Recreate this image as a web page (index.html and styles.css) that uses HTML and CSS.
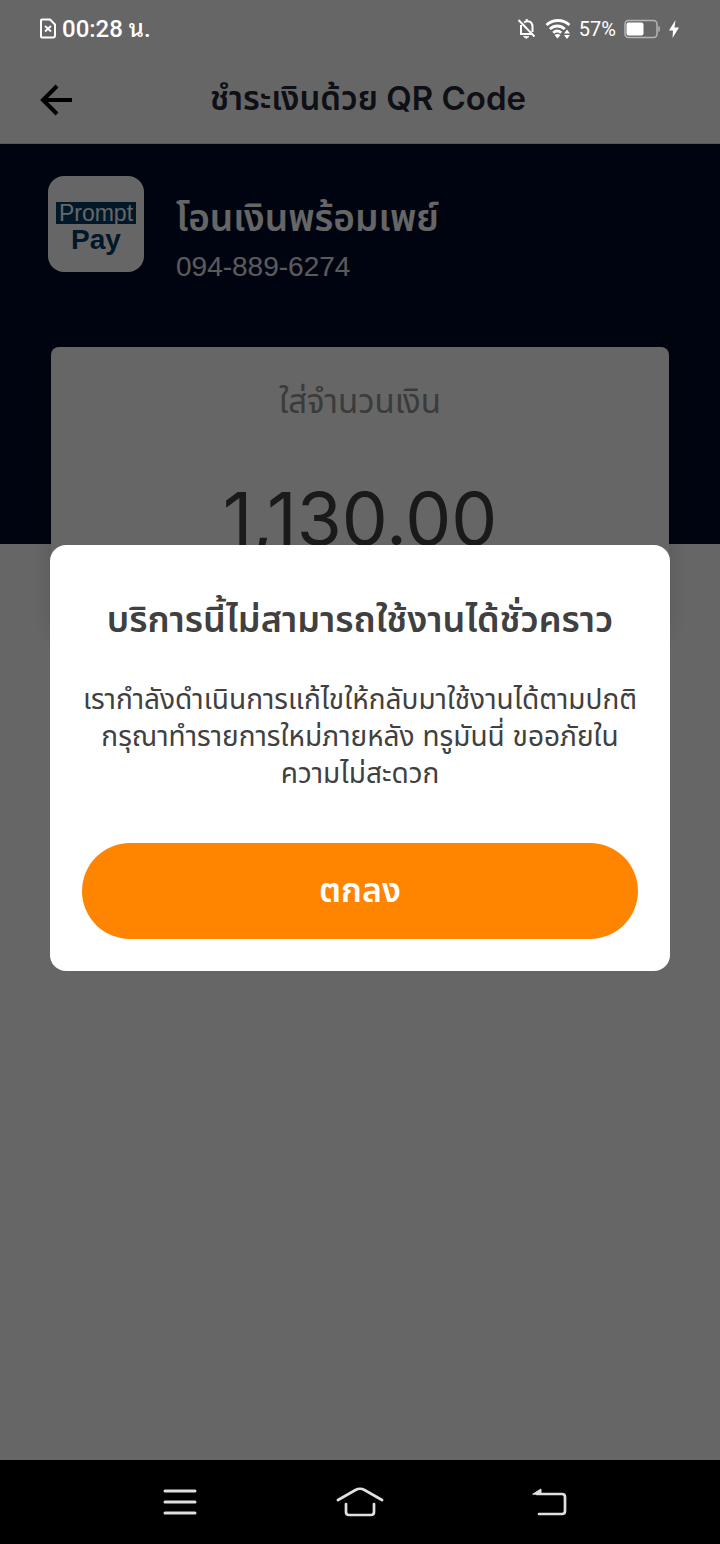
FILE: index.html
```html
<!DOCTYPE html>
<html lang="th">
<head>
<meta charset="utf-8">
<meta name="viewport" content="width=device-width, initial-scale=1">
<title>ชำระเงินด้วย QR Code</title>
<link rel="stylesheet" href="styles.css">
</head>
<body>
<div class="screen">
  <div class="status-bar">
    <div class="status-group">
      <svg class="icon" width="18" height="22" viewBox="0 0 18 22" fill="none" stroke="currentColor" stroke-width="2" stroke-linejoin="round"><path d="M3 1.500h8l5 5v11a2 2 0 0 1-2 2H3a1 1 0 0 1-1-1v-16a1 1 0 0 1 1-1z"/><path d="M6 8l6 5.500M12 8l-6 5.500"/></svg>
      <span class="clock">00:28 น.</span>
    </div>
    <div class="status-group status-right">
      <svg class="icon" width="20" height="22" viewBox="0 0 20 22" fill="none" stroke="currentColor" stroke-width="2"><path d="M1.500 2l16 16.500M4 7v9h11M7 4.500c4-3 8.500-.5 8.500 4V14"/><path d="M6.500 18.500h5.500l-2.700 2z" fill="currentColor" stroke-width=".8"/><path d="M9.700 1v2"/></svg>
      <svg class="icon" width="26" height="22" viewBox="0 0 26 22" fill="none" stroke="currentColor" stroke-width="2.800"><path d="M1.500 7c6.500-6 16.500-6 23 0M4.800 11c4.500-4 10.500-4 15 0M8.200 14.800c2.700-2.500 5.300-2.500 8 0"/><path d="M9.500 17q3-2 6 0l-3 3.500z" fill="currentColor" stroke="none"/><path d="M22 11.500l3 4h-6zM22 21l3-4h-6z" fill="currentColor" stroke="none"/></svg>
      <span class="percent">57%</span>
      <svg class="icon" width="36" height="20" viewBox="0 0 36 20" fill="none"><rect x="1" y="1.500" width="32" height="17" rx="3.500" stroke="#b5b5b5" stroke-width="1.500"/><rect x="2.500" y="3.500" width="17" height="13" rx="2" fill="currentColor"/><path d="M35 7.500v5" stroke="#b5b5b5" stroke-width="1.500"/></svg>
      <svg class="icon" width="12" height="20" viewBox="0 0 12 20"><path d="M7.500 1L1 11.500h4L4.500 19 11 8.500H6.500z" fill="currentColor"/></svg>
    </div>
  </div>

  <header class="header">
    <button class="back" type="button" aria-label="กลับ">
      <svg class="icon" width="32" height="32" viewBox="0 0 32 32" fill="none" stroke="currentColor" stroke-width="4"><path d="M32 16H3M17 2L3 16l14 14"/></svg>
    </button>
    <h1 class="title">ชำระเงินด้วย QR Code</h1>
  </header>

  <main class="content">
    <section class="payee">
      <div class="logo"><span class="logo-top">Prompt</span><span class="logo-bottom">Pay</span></div>
      <div class="payee-text">
        <h2 class="payee-name">โอนเงินพร้อมเพย์</h2>
        <p class="payee-number">094-889-6274</p>
      </div>
    </section>
    <section class="amount-card">
      <p class="amount-label">ใส่จำนวนเงิน</p>
      <p class="amount">1,130.00</p>
    </section>
  </main>

  <nav class="nav-bar">
    <button class="nav-button" type="button" aria-label="แอปล่าสุด"><svg class="icon" width="34" height="28" viewBox="0 0 34 28" fill="none" stroke="currentColor" stroke-width="3" stroke-linecap="round"><path d="M2 3h30M2 14h30M2 25h30"/></svg></button>
    <button class="nav-button" type="button" aria-label="หน้าหลัก"><svg class="icon" width="48" height="30" viewBox="0 0 48 30" fill="none" stroke="currentColor" stroke-width="2.700" stroke-linecap="round" stroke-linejoin="round"><path d="M2 13L19.500 3q4.500-2.500 9 0L46 13M10 17v8q0 3 3 3h22q3 0 3-3v-8"/></svg></button>
    <button class="nav-button" type="button" aria-label="ย้อนกลับ"><svg class="icon" width="54" height="30" viewBox="-18 0 54 30" fill="none" stroke="currentColor" stroke-width="2.700" stroke-linecap="round"><path d="M6 7h25q3 0 3 3v14q0 3-3 3H8"/><path d="M2 7l8-5v5z" fill="currentColor" stroke-width="1" stroke-linejoin="round"/></svg></button>
  </nav>

  <div class="overlay">
    <div class="dialog" role="dialog" aria-modal="true" aria-labelledby="dialog-title">
      <h2 class="dialog-title" id="dialog-title">บริการนี้ไม่สามารถใช้งานได้ชั่วคราว</h2>
      <p class="dialog-text">เรากำลังดำเนินการแก้ไขให้กลับมาใช้งานได้ตามปกติ<br>กรุณาทำรายการใหม่ภายหลัง ทรูมันนี่ ขออภัยใน<br>ความไม่สะดวก</p>
      <button class="confirm" type="button">ตกลง</button>
    </div>
  </div>
</div>
</body>
</html>
```

FILE: styles.css
```css
* { box-sizing: border-box; }

body {
  margin: 0;
  font-family: Inter, "Noto Sans Thai", "Noto Sans Thai UI", "Sarabun", "Noto Sans", sans-serif;
}

h1, h2, p { margin: 0; }

button {
  padding: 0;
  border: 0;
  background: none;
  color: inherit;
  font: inherit;
}

.icon { display: block; flex: none; }

.screen {
  position: relative;
  display: flex;
  flex-direction: column;
  min-height: 100vh;
  background: #fff;
}

.status-bar {
  position: relative;
  z-index: 2;
  display: flex;
  justify-content: space-between;
  align-items: center;
  height: 56px;
  padding: 2px 40px 0 39px;
  color: #fff;
  font-family: Roboto, "Noto Sans Thai Looped", Loma, Garuda, Waree, "Noto Sans Thai", sans-serif;
}

.status-group {
  display: flex;
  align-items: center;
  gap: 5px;
}

.status-right { gap: 8px; }
.clock { font-size: 24px; font-weight: 500; line-height: 28px; }
.percent { font-size: 20px; }

.header {
  display: grid;
  grid-template-columns: 32px 1fr 16px;
  align-items: center;
  height: 88px;
  padding: 0 40px;
  border-bottom: 1px solid #ddd;
  color: #262638;
}

.back { color: #000; }

.title {
  text-align: center;
  font-size: 33px;
  font-weight: 600;
}

.content { flex: 1; background: #fff; }

.payee {
  display: flex;
  align-items: flex-start;
  gap: 32px;
  height: 400px;
  padding: 32px 48px;
  background: #000c28;
  color: #fff;
}

.logo {
  display: flex;
  flex-direction: column;
  align-items: center;
  width: 96px;
  height: 96px;
  padding: 26px 8px 0;
  border-radius: 16px;
  background: #fff;
  font-family: "Liberation Sans", sans-serif;
}

.logo-top {
  width: 100%;
  background: #003c64;
  color: #fff;
  text-align: center;
  font-size: 23px;
  line-height: 22px;
}

.logo-bottom {
  color: #003c64;
  font-size: 28px;
  font-weight: 700;
  line-height: 32px;
}

.payee-text { padding-top: 18px; }

.payee-name {
  font-size: 37px;
  font-weight: 600;
  line-height: 48px;
}

.payee-number {
  font-family: "Liberation Sans", sans-serif;
  font-size: 28px;
  line-height: 50px;
  color: #e0e0e8;
}

.amount-card {
  position: relative;
  height: 285px;
  margin: -197px 51px 0;
  padding-top: 30px;
  border-radius: 8px;
  background: #fff;
  box-shadow: 0 4px 20px rgb(0 0 0 / 15%);
  text-align: center;
}

.amount-label {
  color: #939393;
  font-size: 33px;
  line-height: 48px;
}

.amount {
  margin-top: 46px;
  color: #424242;
  font-size: 73px;
  line-height: 96px;
}

.nav-bar {
  position: relative;
  z-index: 2;
  display: grid;
  grid-template-columns: repeat(3, 1fr);
  height: 84px;
  padding: 0 90px;
  background: #000;
  color: #e0e0e0;
}

.nav-button {
  display: grid;
  place-items: center;
}

.overlay {
  position: absolute;
  inset: 0;
  z-index: 1;
  display: grid;
  place-items: center stretch;
  padding: 56px 50px 84px;
  background: rgb(0 0 0 / 60%);
}

.dialog {
  padding: 44px 32px 32px;
  border-radius: 16px;
  background: #fff;
  color: #404040;
  text-align: center;
}

.dialog-title {
  font-size: 36px;
  font-weight: 600;
  line-height: 60px;
}

.dialog-text {
  margin: 32px 0 51px;
  font-size: 28px;
  line-height: 37px;
  white-space: nowrap;
}

.confirm {
  display: block;
  width: 100%;
  height: 96px;
  border-radius: 48px;
  background: #ff8400;
  color: #fff;
  font-size: 34px;
  font-weight: 600;
}
```
